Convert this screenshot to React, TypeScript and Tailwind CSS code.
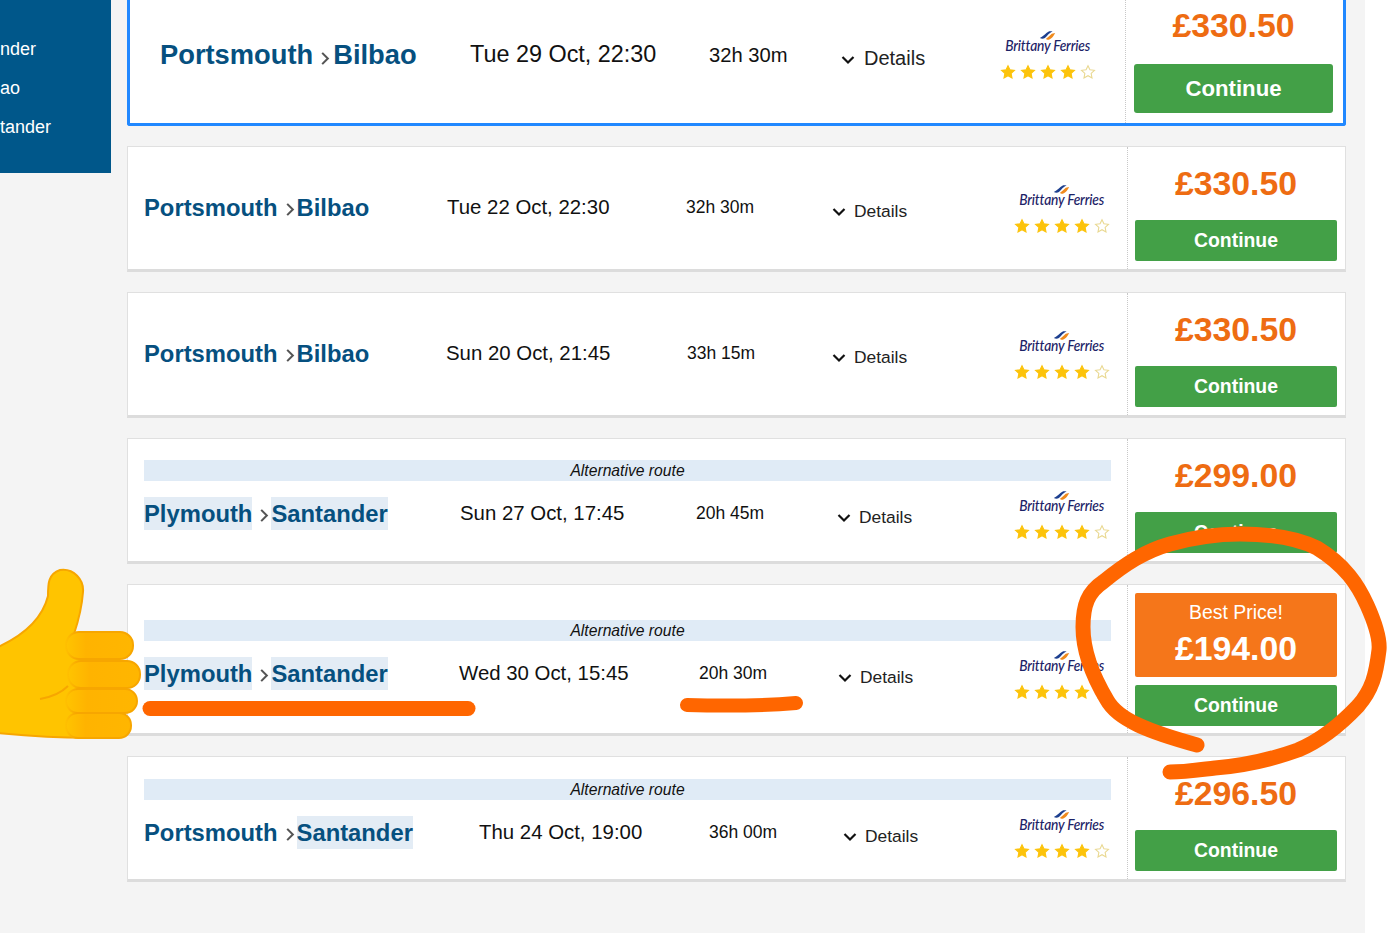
import React from 'react';

interface Trip {
  from: string;
  to: string;
  date: string;
  duration: string;
  price: string;
  alt?: boolean;
  highlightFrom?: boolean;
  highlightTo?: boolean;
  best?: boolean;
  topClass: string;
  heightClass: string;
  routeClass: string;
  dateClass: string;
  durClass: string;
}

const trips: Trip[] = [
  { from: 'Portsmouth', to: 'Bilbao', date: 'Tue 22 Oct, 22:30', duration: '32h 30m', price: '£330.50', topClass: 'pt-[28px]', heightClass: 'h-[126px]', routeClass: 'w-[303px]', dateClass: 'w-[239px]', durClass: 'w-[146px]' },
  { from: 'Portsmouth', to: 'Bilbao', date: 'Sun 20 Oct, 21:45', duration: '33h 15m', price: '£330.50', topClass: 'pt-[28px]', heightClass: 'h-[126px]', routeClass: 'w-[302px]', dateClass: 'w-[241px]', durClass: 'w-[145px]' },
  { from: 'Plymouth', to: 'Santander', date: 'Sun 27 Oct, 17:45', duration: '20h 45m', price: '£299.00', alt: true, highlightFrom: true, highlightTo: true, topClass: 'pt-[21px]', heightClass: 'h-[126px]', routeClass: 'w-[316px]', dateClass: 'w-[236px]', durClass: 'w-[141px]' },
  { from: 'Plymouth', to: 'Santander', date: 'Wed 30 Oct, 15:45', duration: '20h 30m', price: '£194.00', alt: true, best: true, highlightFrom: true, highlightTo: true, topClass: 'pt-[35px]', heightClass: 'h-[152px]', routeClass: 'w-[315px]', dateClass: 'w-[240px]', durClass: 'w-[139px]' },
  { from: 'Portsmouth', to: 'Santander', date: 'Thu 24 Oct, 19:00', duration: '36h 00m', price: '£296.50', alt: true, highlightTo: true, topClass: 'pt-[22px]', heightClass: 'h-[126px]', routeClass: 'w-[335px]', dateClass: 'w-[230px]', durClass: 'w-[134px]' },
];

function Star({ filled }: { filled: boolean }) {
  return (
    <svg viewBox="0 0 24 24" className="w-[16px] h-[16px]">
      <path
        d="M12 2.5l2.9 6.2 6.8.8-5 4.6 1.3 6.7-6-3.3-6 3.3 1.3-6.7-5-4.6 6.8-.8z"
        fill={filled ? '#fcc30b' : '#fff'}
        stroke={filled ? '#fcc30b' : '#e9d890'}
        strokeWidth="1.6"
      />
    </svg>
  );
}

function Brand() {
  return (
    <div className="w-[100px] flex flex-col items-center mt-[4px] -mr-[1px]">
      <svg viewBox="0 0 20 12" className="w-[17px] h-[11px] -mb-[4px] -ml-[1px]">
        <path d="M1 9 C5 7 8 3 12 1 L16 1 C12 3 10 6 7 9 C5 10 3 10 1 9z" fill="#1d3f8f" />
        <path d="M8 10 C11 8 13 6 15 4 L19 3 C17 7 14 11 10 11z" fill="#ef8a1d" />
      </svg>
      <div className="font-['Lato',sans-serif] font-medium italic text-[#1c2266] text-[14.5px] leading-[18px] whitespace-nowrap tracking-[-0.2px] scale-x-[0.95]">
        Brittany Ferries
      </div>
      <div className="flex gap-[4px] mt-[9px]">
        <Star filled />
        <Star filled />
        <Star filled />
        <Star filled />
        <Star filled={false} />
      </div>
    </div>
  );
}

function Chevron({ large }: { large?: boolean }) {
  return (
    <svg viewBox="0 0 10 16" className={large ? 'w-[10px] h-[15px] ml-[7px] mr-[3px] mt-[6px]' : 'w-[10px] h-[15px] ml-[7px] mr-[2px] mt-[4px]'}>
      <path d="M2 2 L8 8 L2 14" fill="none" stroke="#555" strokeWidth="2.2" />
    </svg>
  );
}

function Details({ large }: { large?: boolean }) {
  return (
    <div className={large ? 'flex items-center gap-[9px] text-[20px] text-[#222] mt-[6px]' : 'flex items-center gap-[8px] text-[17.4px] text-[#222] mt-[8px]'}>
      <svg viewBox="0 0 14 10" className="w-[14px] h-[10px] mt-[3px]">
        <path d="M1.5 2 L7 7.5 L12.5 2" fill="none" stroke="#111" strokeWidth="2.2" />
      </svg>
      Details
    </div>
  );
}

function TripRow({ trip }: { trip: Trip }) {
  return (
    <div className={`flex bg-white border border-[#e0e0e0] border-b-[3px] border-b-[#dcdcdc] ${trip.heightClass}`}>
      <div className={`w-[999px] shrink-0 px-[16px] ${trip.topClass}`}>
        {trip.alt && (
          <div className="h-[21px] bg-[#e0ebf6] text-center italic text-[15.7px] leading-[21px] text-[#111]">
            Alternative route
          </div>
        )}
        <div className="flex items-center h-[64px]">
          <div className={`flex items-center shrink-0 text-[23.8px] font-bold text-[#06507f] ${trip.routeClass}`}>
            <span className={trip.highlightFrom ? 'bg-[#e3ecf5] leading-[33px]' : 'leading-[33px]'}>{trip.from}</span>
            <Chevron />
            <span className={trip.highlightTo ? 'bg-[#e3ecf5] leading-[33px]' : 'leading-[33px]'}>{trip.to}</span>
          </div>
          <div className={`shrink-0 text-[20.4px] text-[#111] ${trip.dateClass}`}>{trip.date}</div>
          <div className={`shrink-0 text-[17.5px] text-[#111] ${trip.durClass}`}>{trip.duration}</div>
          <Details />
          <div className="ml-auto">
            <Brand />
          </div>
        </div>
      </div>
      <div className="flex-1 border-l border-dotted border-[#c8c8c8] pl-[7px] pr-[8px]">
        {trip.best ? (
          <div className="mt-[8px] h-[84px] bg-[#f5761a] rounded-[2px] text-white flex flex-col items-center">
            <div className="text-[19.4px] leading-[22px] mt-[8px]">Best Price!</div>
            <div className="text-[33.8px] font-bold leading-[40px] mt-[5px]">{trip.price}</div>
          </div>
        ) : (
          <div className="mt-[19px] h-[34px] text-center text-[33.8px] font-bold leading-[34px] text-[#ee6c12]">{trip.price}</div>
        )}
        <button className={`block w-full h-[41px] bg-[#43a047] rounded-[2px] text-white text-[19.4px] font-bold ${trip.best ? 'mt-[8px]' : 'mt-[20px]'}`}>
          Continue
        </button>
      </div>
    </div>
  );
}

function Annotations() {
  return (
    <svg className="absolute left-0 top-0 pointer-events-none" width="1400" height="933" viewBox="0 0 1400 933">
      <defs>
        <linearGradient id="finger" x1="0" y1="0" x2="1" y2="0">
          <stop offset="0" stopColor="#ffc400" />
          <stop offset="0.3" stopColor="#ffb300" />
          <stop offset="1" stopColor="#ffb600" />
        </linearGradient>
        <linearGradient id="fingerEdge" x1="0" y1="0" x2="1" y2="0">
          <stop offset="0" stopColor="#ffc000" />
          <stop offset="0.15" stopColor="#f7a600" />
          <stop offset="1" stopColor="#f7a600" />
        </linearGradient>
      </defs>
      <path
        d="M1197 745 C1150 732 1118 720 1107 700 C1092 675 1083 650 1083 627 C1083 605 1088 592 1103 582 C1125 564 1145 551 1170 544 C1195 537 1215 534 1240 534 C1270 534 1297 538 1317 548 C1345 565 1358 585 1367 605 C1376 625 1380 640 1379 650 C1376 675 1372 690 1358 706 C1340 725 1322 740 1298 750 C1270 760 1240 766 1215 768 C1198 770 1185 772 1170 772"
        fill="none"
        stroke="#ff6600"
        strokeWidth="15"
        strokeLinecap="round"
      />
      <path d="M150 708.5 L468 708.5" stroke="#ff6600" strokeWidth="15" strokeLinecap="round" />
      <path d="M687 705 C720 706 760 706 796 703" fill="none" stroke="#ff6600" strokeWidth="14" strokeLinecap="round" />
      <path
        d="M-2 647 C22 636 42 620 48 596 C48 584 48 574 60 570 C74 568 84 580 83 592 C82 606 78 622 74 634 L100 634 L115 737 C80 739 30 736 -2 733 Z"
        fill="#ffc400"
        stroke="#f7a600"
        strokeWidth="2"
      />
      <g stroke="url(#fingerEdge)" strokeWidth="2" fill="url(#finger)">
        <rect x="66" y="632" width="67" height="27" rx="13" />
        <rect x="68" y="661" width="72" height="27" rx="13" />
        <rect x="66" y="689" width="71" height="24" rx="12" />
        <rect x="66" y="713" width="65" height="25" rx="12" />
      </g>
      <path d="M40 699 C52 697 62 692 68 686" fill="none" stroke="#f7a600" strokeWidth="2" />
    </svg>
  );
}

export default function App() {
  return (
    <div className="relative w-[1400px] h-[933px] overflow-hidden bg-white font-['Liberation_Sans',Arial,sans-serif]">
      <div className="flex w-[1365px] h-full bg-[#f4f4f4]">
        <div className="w-[111px] h-[173px] shrink-0 bg-[#00578a] text-white text-[18px] pt-[30px]">
          <div className="leading-[39px]">nder</div>
          <div className="leading-[39px]">ao</div>
          <div className="leading-[39px]">tander</div>
        </div>
        <div className="ml-[16px] w-[1219px] flex flex-col gap-[20px]">
          <div className="flex h-[126px] bg-white border-x-[3px] border-b-[3px] border-[#2188ff] rounded-b-[3px]">
            <div className="w-[995px] shrink-0 pl-[30px] pr-[28px] pt-[23px]">
              <div className="flex items-center h-[64px]">
                <div className="flex items-center shrink-0 w-[310px] text-[27.3px] font-bold text-[#06507f]">
                  Portsmouth
                  <Chevron large />
                  Bilbao
                </div>
                <div className="shrink-0 w-[239px] text-[23.4px] text-[#111]">Tue 29 Oct, 22:30</div>
                <div className="shrink-0 w-[132px] text-[20.2px] text-[#111]">32h 30m</div>
                <Details large />
                <div className="ml-auto -mt-[5px]">
                  <Brand />
                </div>
              </div>
            </div>
            <div className="flex-1 border-l border-dotted border-[#c8c8c8] pl-[8px] pr-[10px]">
              <div className="mt-[8px] h-[34px] text-center text-[33.8px] font-bold leading-[34px] text-[#ee6c12]">£330.50</div>
              <button className="block mt-[22px] w-full h-[49px] bg-[#43a047] rounded-[3px] text-white text-[22.2px] font-bold">Continue</button>
            </div>
          </div>
          {trips.map((trip) => (
            <TripRow key={trip.date} trip={trip} />
          ))}
        </div>
      </div>
      <Annotations />
    </div>
  );
}
